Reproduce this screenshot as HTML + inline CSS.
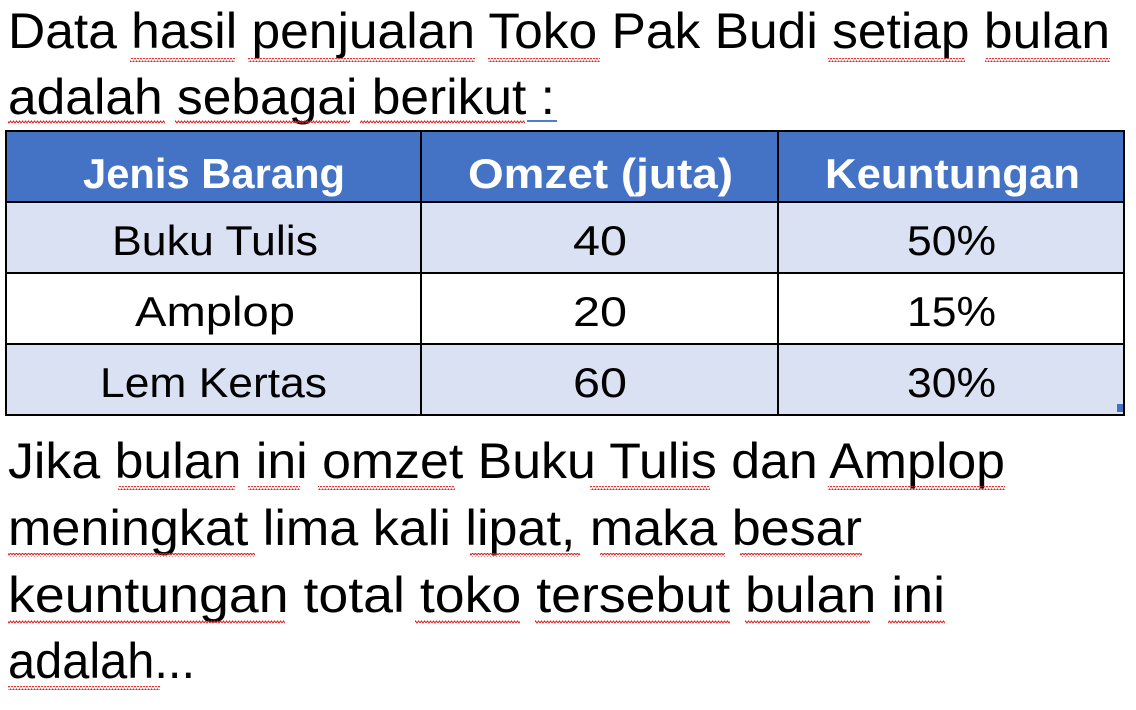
<!DOCTYPE html>
<html><head><meta charset="utf-8"><style>html,body{margin:0;padding:0;background:#fff;width:1136px;height:710px;overflow:hidden}</style></head>
<body>
<svg width="1136" height="710" xmlns="http://www.w3.org/2000/svg" font-family="Liberation Sans, sans-serif">
<defs>
<pattern id="w" width="6" height="4" patternUnits="userSpaceOnUse">
<path d="M0 3 L1.5 1 L3 3 L4.5 1 L6 3" stroke="#e02020" stroke-width="1" fill="none"/>
</pattern>
</defs>
<rect width="1136" height="710" fill="#fff"/>
<g font-size="50" fill="#000">
<text x="8" y="48" textLength="1102" lengthAdjust="spacingAndGlyphs">Data hasil penjualan Toko Pak Budi setiap bulan</text>
<text x="8" y="114" textLength="547" lengthAdjust="spacingAndGlyphs">adalah sebagai berikut :</text>
<text x="8" y="478" textLength="997" lengthAdjust="spacingAndGlyphs">Jika bulan ini omzet Buku Tulis dan Amplop</text>
<text x="8" y="545" textLength="854" lengthAdjust="spacingAndGlyphs">meningkat lima kali lipat, maka besar</text>
<text x="8" y="612" textLength="937" lengthAdjust="spacingAndGlyphs">keuntungan total toko tersebut bulan ini</text>
<text x="8" y="678" textLength="187" lengthAdjust="spacingAndGlyphs">adalah...</text>
</g>
<g fill="url(#w)">
<rect x="130" y="58" width="105" height="4"/><rect x="248" y="58" width="227" height="4"/><rect x="488" y="58" width="112" height="4"/><rect x="828" y="58" width="137" height="4"/><rect x="985" y="58" width="125" height="4"/>
<rect x="8" y="120" width="157" height="4"/><rect x="175" y="120" width="175" height="4"/><rect x="360" y="120" width="165" height="4"/>
<rect x="118" y="486" width="117" height="4"/><rect x="248" y="486" width="52" height="4"/><rect x="318" y="486" width="137" height="4"/><rect x="590" y="486" width="120" height="4"/><rect x="828" y="486" width="177" height="4"/>
<rect x="8" y="553" width="247" height="4"/><rect x="470" y="553" width="110" height="4"/><rect x="600" y="553" width="125" height="4"/><rect x="740" y="553" width="122" height="4"/>
<rect x="8" y="620" width="277" height="4"/><rect x="415" y="620" width="105" height="4"/><rect x="535" y="620" width="195" height="4"/><rect x="745" y="620" width="125" height="4"/><rect x="888" y="620" width="57" height="4"/>
<rect x="8" y="686" width="152" height="4"/>
</g>
<rect x="527" y="120" width="30" height="2" fill="#4a7fd0"/>
<!-- table -->
<rect x="6" y="131" width="1118" height="71" fill="#4472C4"/>
<rect x="6" y="202" width="1118" height="71" fill="#D9E1F2"/>
<rect x="6" y="273" width="1118" height="71" fill="#fff"/>
<rect x="6" y="344" width="1118" height="71" fill="#D9E1F2"/>
<g stroke="#000" stroke-width="2" fill="none">
<rect x="6" y="131" width="1118" height="284"/>
<line x1="6" y1="202" x2="1124" y2="202"/><line x1="6" y1="273" x2="1124" y2="273"/><line x1="6" y1="344" x2="1124" y2="344"/>
<line x1="421" y1="131" x2="421" y2="415"/><line x1="778" y1="131" x2="778" y2="415"/>
</g>
<rect x="1117" y="404" width="6" height="8" fill="#4472C4"/>
<g font-size="42" font-weight="bold" fill="#fff">
<text x="83" y="188" textLength="262" lengthAdjust="spacingAndGlyphs">Jenis Barang</text>
<text x="468" y="188" textLength="265" lengthAdjust="spacingAndGlyphs">Omzet (juta)</text>
<text x="825" y="188" textLength="255" lengthAdjust="spacingAndGlyphs">Keuntungan</text>
</g>
<g font-size="42" fill="#000">
<text x="112" y="255" textLength="206" lengthAdjust="spacingAndGlyphs">Buku Tulis</text>
<text x="573" y="255" textLength="54" lengthAdjust="spacingAndGlyphs">40</text>
<text x="907" y="255" textLength="89" lengthAdjust="spacingAndGlyphs">50%</text>
<text x="135" y="326" textLength="160" lengthAdjust="spacingAndGlyphs">Amplop</text>
<text x="573" y="326" textLength="54" lengthAdjust="spacingAndGlyphs">20</text>
<text x="907" y="326" textLength="89" lengthAdjust="spacingAndGlyphs">15%</text>
<text x="100" y="397" textLength="227" lengthAdjust="spacingAndGlyphs">Lem Kertas</text>
<text x="573" y="397" textLength="54" lengthAdjust="spacingAndGlyphs">60</text>
<text x="907" y="397" textLength="89" lengthAdjust="spacingAndGlyphs">30%</text>
</g>
</svg>
</body></html>
